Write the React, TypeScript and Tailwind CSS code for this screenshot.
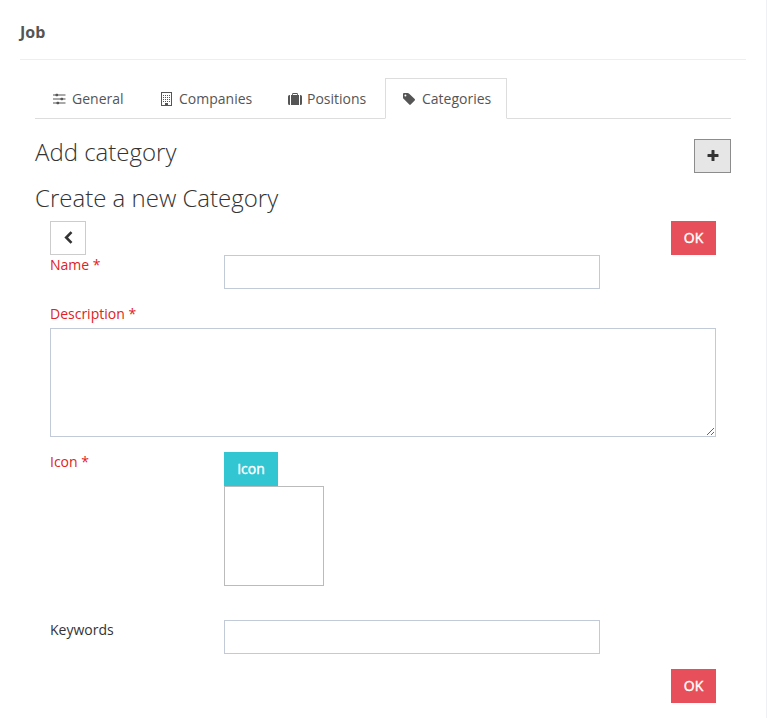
import type { ReactNode } from "react";

function EqualizerIcon() {
  return (
    <svg width="13" height="12" viewBox="0 0 13 12" className="shrink-0" fill="currentColor">
      <path d="M0 1.500h12.500v1H0zM0 5.500h12.500v1H0zM0 9.500h12.500v1H0z" />
      <rect x="2.500" y=".7" width="2.600" height="2.600" rx=".8" />
      <rect x="7.500" y="4.700" width="2.600" height="2.600" rx=".8" />
      <rect x="3.500" y="8.700" width="2.600" height="2.600" rx=".8" />
    </svg>
  );
}

function BuildingIcon() {
  return (
    <svg width="11" height="14" viewBox="0 0 11 14" className="shrink-0" fill="currentColor">
      <path fillRule="evenodd" d="M0 0h11v14H0zM1 1v12h3v-2h3v2h3V1z" />
      {[3, 5, 7, 9].map((y) =>
        [2, 4, 6, 8].map((x) => <rect key={`${x}-${y}`} x={x} y={y} width="1" height="1" />)
      )}
      <path d="M4 11h3v2H4z" />
    </svg>
  );
}

function SuitcaseIcon() {
  return (
    <svg width="14" height="12" viewBox="0 0 14 12" className="shrink-0" fill="currentColor">
      <path d="M2 2v10h-.5A1.500 1.500 0 0 1 0 10.500v-7A1.500 1.500 0 0 1 1.500 2zM12 2h.5A1.500 1.500 0 0 1 14 3.500v7a1.500 1.500 0 0 1-1.500 1.500H12z" />
      <path fillRule="evenodd" d="M3 2h1.200V.8a.8.8 0 0 1 .8-.8h4a.8.8 0 0 1 .8.8V2H11v10H3zM5 1v1h4V1z" />
    </svg>
  );
}

function TagIcon() {
  return (
    <svg width="12" height="12" viewBox="0 0 12 12" className="shrink-0" fill="currentColor">
      <path fillRule="evenodd" d="M1 0h3.500c.6 0 1.200.3 1.700.7l5.500 5.400c.4.4.4 1 0 1.400l-4 4.100c-.4.4-1 .4-1.400 0L.8 6.100C.300 5.600 0 5 0 4.400V1a1 1 0 0 1 1-1zM2.400 1.400a1 1 0 1 0 0 2 1 1 0 0 0 0-2z" />
    </svg>
  );
}

const tabs = [
  { label: "General", icon: <EqualizerIcon />, box: "w-[106px] gap-[6px]", active: false },
  { label: "Companies", icon: <BuildingIcon />, box: "w-[125px] gap-[7px]", active: false },
  { label: "Positions", icon: <SuitcaseIcon />, box: "w-[113px] gap-[5px]", active: false },
  { label: "Categories", icon: <TagIcon />, box: "w-[122px] gap-[7px]", active: true },
];

function Label({ children, required }: { children: ReactNode; required?: boolean }) {
  return (
    <label className={`block w-[174px] shrink-0 leading-5 ${required ? "text-[#e02222]" : "text-[#333]"}`}>
      {children}
      {required && " *"}
    </label>
  );
}

function OkButton() {
  return (
    <button className="flex h-[34px] w-[45px] items-center justify-center bg-[#e7505a] text-sm text-white [-webkit-text-stroke:0.4px_white]">OK</button>
  );
}

export default function App() {
  return (
    <div className="h-[718px] w-[767px] overflow-hidden border-r border-[#eef0f5] bg-white pl-5 font-['Open_Sans',sans-serif] text-sm text-[#333]">
      <header className="flex h-[60px] w-[726px] items-center border-b border-[#eee] pt-[5px]">
        <h1 className="text-base font-bold text-[#555]">Job</h1>
      </header>

      <main className="ml-[15px] w-[696px]">
        <nav className="mt-[18px] flex h-[41px] gap-[2px] border-b border-[#ddd]">
          {tabs.map((tab) => (
            <button
              key={tab.label}
              className={`flex h-[41px] items-center border pl-[17px] text-[#555] ${tab.box} ${
                tab.active ? "border-[#ddd] border-b-white bg-white" : "border-transparent"
              }`}
            >
              {tab.icon}
              <span>{tab.label}</span>
            </button>
          ))}
        </nav>

        <div className="mt-5 flex h-[46px] justify-between">
          <h2 className="text-2xl leading-[26px] font-light">Add category</h2>
          <button className="flex h-[34px] w-[37px] items-center justify-center border border-[#8c8c8c] bg-[#e6e6e6]">
            <svg width="12" height="12" viewBox="0 0 12 12" fill="currentColor">
              <path d="M5 0h2q.5 0 .5.5V4H11q.5 0 .5.5v2q0 .5-.5.5H7.500v3.500q0 .5-.5.5H5q-.5 0-.5-.5V7H1q-.5 0-.5-.5v-2q0-.5.5-.5h3.500V.5q0-.5.5-.5z" />
            </svg>
          </button>
        </div>
        <h2 className="h-9 text-2xl leading-[26px] font-light">Create a new Category</h2>

        <form className="px-[15px]" onSubmit={(e) => e.preventDefault()}>
          <div className="flex justify-between">
            <button className="flex h-[34px] w-9 items-center justify-center border border-[#ccc] bg-white pb-px">
              <svg width="9" height="13" viewBox="0 0 9 13" fill="none" stroke="currentColor" strokeWidth="2.600">
                <path d="M7.500 1.200 2.200 6.500l5.300 5.300" />
              </svg>
            </button>
            <OkButton />
          </div>

          <div className="flex">
            <Label required>Name</Label>
            <input className="h-[34px] w-[376px] border border-[#c2cad8] px-3" />
          </div>

          <div className="mt-[15px]">
            <Label required>Description</Label>
            <textarea className="mt-1 block h-[109px] w-full border border-[#c2cad8] px-3" />
          </div>

          <div className="mt-[15px] flex h-[168px]">
            <Label required>Icon</Label>
            <div>
              <button className="flex h-[34px] w-[54px] items-center justify-center bg-[#32c5d2] text-white [-webkit-text-stroke:0.4px_white]">Icon</button>
              <div className="size-[100px] border border-[#bbb]" />
            </div>
          </div>

          <div className="flex">
            <Label>Keywords</Label>
            <input className="h-[34px] w-[376px] border border-[#c2cad8] px-3" />
          </div>

          <div className="mt-[15px] flex justify-end">
            <OkButton />
          </div>
        </form>
      </main>
    </div>
  );
}
